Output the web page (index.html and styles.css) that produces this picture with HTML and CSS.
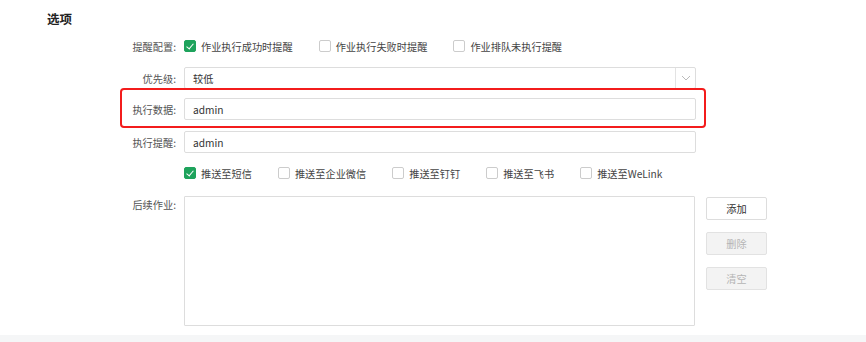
FILE: index.html
```html
<!DOCTYPE html>
<html lang="zh">
<head>
    <meta charset="UTF-8">
    <title>选项</title>
    <link rel="stylesheet" href="styles.css">
</head>
<body>
    <div class="section-title">选项</div>

    <div class="form">
        <div class="row row-checks">
            <div class="label">提醒配置:</div>
            <div class="checks">
                <label class="check"><span class="box checked"></span>作业执行成功时提醒</label>
                <label class="check"><span class="box"></span>作业执行失败时提醒</label>
                <label class="check"><span class="box"></span>作业排队未执行提醒</label>
            </div>
        </div>

        <div class="row row-select">
            <div class="label">优先级:</div>
            <div class="select">
                <span class="select-value">较低</span>
                <span class="select-arrow">
                    <svg width="10" height="6" viewBox="0 0 10 6"><path d="M1 1 L5 5 L9 1" fill="none" stroke="#bbb" stroke-width="1"/></svg>
                </span>
            </div>
        </div>

        <div class="row row-input highlight">
            <div class="label">执行数据:</div>
            <div class="input">admin</div>
        </div>

        <div class="row row-input row-second">
            <div class="label">执行提醒:</div>
            <div class="input">admin</div>
        </div>

        <div class="row row-push">
            <div class="label"></div>
            <div class="checks">
                <label class="check"><span class="box checked"></span>推送至短信</label>
                <label class="check"><span class="box"></span>推送至企业微信</label>
                <label class="check"><span class="box"></span>推送至钉钉</label>
                <label class="check"><span class="box"></span>推送至飞书</label>
                <label class="check"><span class="box"></span>推送至WeLink</label>
            </div>
        </div>

        <div class="row row-jobs">
            <div class="label label-top">后续作业:</div>
            <div class="textarea"></div>
            <div class="buttons">
                <button class="btn">添加</button>
                <button class="btn" disabled>删除</button>
                <button class="btn" disabled>清空</button>
            </div>
        </div>
    </div>

    <div class="footer-strip"></div>
</body>
</html>
```

FILE: styles.css
```css
body {
    margin: 0;
    padding: 0;
    background-color: #fff;
    font-family: "Noto Sans CJK SC", "Noto Sans", sans-serif;
    font-size: 10.2px;
    color: #333;
    width: 866px;
    height: 342px;
    overflow: hidden;
}

.section-title {
    padding: 9px 0 0 47px;
    height: 19px;
    line-height: 19px;
    font-size: 12.5px;
    font-weight: bold;
    color: #222;
}

.form {
    padding-left: 100px;
}

.row {
    display: flex;
    align-items: center;
    gap: 8px;
}

.label {
    width: 76px;
    flex-shrink: 0;
    text-align: right;
    color: #555;
}

.row-checks {
    height: 20px;
    margin-top: 8px;
}

.checks {
    display: flex;
    align-items: center;
}

.check {
    display: flex;
    align-items: center;
    gap: 5px;
    margin-right: 26px;
    color: #444;
    white-space: nowrap;
}

.box {
    width: 12px;
    height: 12px;
    box-sizing: border-box;
    border: 1px solid #ccc;
    border-radius: 2px;
    background-color: #fff;
    position: relative;
}

.box.checked {
    background-color: #1ea35c;
    border-color: #1ea35c;
}

.box.checked::after {
    content: "";
    position: absolute;
    left: 3px;
    top: 1px;
    width: 3px;
    height: 6px;
    border-right: 1.5px solid #fff;
    border-bottom: 1.5px solid #fff;
    transform: rotate(40deg);
}

.row-select {
    margin-top: 11px;
}

.select,
.input {
    width: 512px;
    height: 22px;
    box-sizing: border-box;
    border: 1px solid #ddd;
    border-radius: 2px;
    display: flex;
    align-items: center;
    color: #333;
    flex-shrink: 0;
}

.select-value {
    flex: 1;
    padding-left: 8px;
}

.select-arrow {
    width: 19px;
    height: 100%;
    border-left: 1px solid #e3e3e3;
    display: flex;
    align-items: center;
    justify-content: center;
}

.input {
    padding-left: 8px;
}

.row-input {
    margin-top: 9px;
}

.row-second {
    margin-top: 11px;
}

.highlight {
    position: relative;
    width: 596px;
}

.highlight::after {
    content: "";
    position: absolute;
    left: 20px;
    right: -10px;
    top: -10px;
    bottom: -8px;
    border: 2px solid #f31c1c;
    border-radius: 4px;
    pointer-events: none;
}

.row-push {
    height: 20px;
    margin-top: 10px;
}

.row-jobs {
    align-items: flex-start;
    margin-top: 13px;
}

.label-top {
    line-height: 18px;
}

.textarea {
    width: 511px;
    height: 130px;
    box-sizing: border-box;
    border: 1px solid #ddd;
    border-radius: 1px;
    flex-shrink: 0;
}

.buttons {
    display: flex;
    flex-direction: column;
    gap: 12px;
    margin-left: 3px;
    margin-top: 1px;
}

.btn {
    width: 61px;
    height: 23px;
    box-sizing: border-box;
    border: 1px solid #ddd;
    border-radius: 2px;
    background-color: #fff;
    color: #333;
    font-family: inherit;
    font-size: 10.2px;
    padding: 0;
}

.btn:disabled {
    background-color: #f3f3f3;
    border-color: #e2e2e2;
    color: #b5b5b5;
}

.footer-strip {
    margin-top: 9px;
    height: 10px;
    background-color: #f5f6f7;
}
```
